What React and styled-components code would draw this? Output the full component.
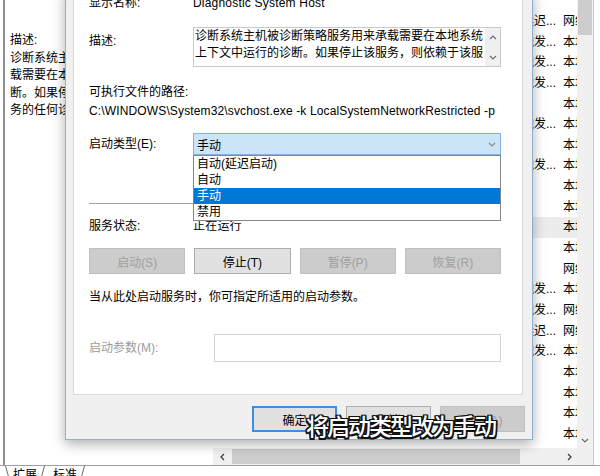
import React from 'react';
import styled, { createGlobalStyle } from 'styled-components';

const GlobalStyle = createGlobalStyle`
  html, body { margin: 0; padding: 0; background: #fff; }
  body {
    font-family: "Liberation Sans", "Noto Sans CJK SC", sans-serif;
    font-size: 12px;
    color: #000;
  }
  * { box-sizing: border-box; }
`;

const services = [
    ['Delivery Optimization', '自动(延迟...', '网络服务'],
    ['Device Association Service', '手动(触发...', '本地系统'],
    ['Device Install Service', '手动(触发...', '本地系统'],
    ['Device Management Enrollment', '手动(触发...', '本地系统'],
    ['Device Management WAP Push', '手动', '本地系统'],
    ['Device Setup Manager', '手动(触发...', '本地系统'],
    ['DevicesFlow_3e5a1', '手动', '本地系统'],
    ['DevQuery Background Discovery', '手动(触发...', '本地系统'],
    ['DHCP Client', '手动', '本地系统'],
    ['Diagnostic Execution Service', '手动', '本地系统'],
    ['Diagnostic Policy Service', '手动', '本地系统'],
    ['Diagnostic Service Host', '手动', '本地系统'],
    ['Diagnostic System Host', '手动', '网络服务'],
    ['Distributed Link Tracking Client', '手动(触发...', '本地系统'],
    ['Distributed Transaction Coordinator', '手动(触发...', '网络服务'],
    ['DNS Client', '自动(延迟...', '网络服务'],
    ['Downloaded Maps Manager', '手动(触发...', '本地系统'],
    ['Embedded Mode', '手动', '本地系统'],
    ['Encrypting File System (EFS)', '手动', '本地系统'],
    ['Enterprise App Management', '手动', '本地系统'],
    ['Extensible Authentication Protocol', '手动', '本地系统'],
];

const startOptions = ['自动(延迟启动)', '自动', '手动', '禁用'];

function Chevron({ dir = 'down', color = '#6d6d6d' }) {
    const points = {
        down: '1,3 4,6 7,3',
        up: '1,5 4,2 7,5',
        left: '5,1 2,4 5,7',
        right: '3,1 6,4 3,7',
    }[dir];
    return (
        <svg width="8" height="8" viewBox="0 0 8 8">
            <polyline points={points} fill="none" stroke={color} strokeWidth="1.2" />
        </svg>
    );
}

function App() {
    return (
        <>
            <GlobalStyle />
            <Screen>
                <Frame>
                    <Body>
                        <InfoPane>
                            <div>描述:</div>
                            <div>诊断系统主机被诊断策略服务用来承载需要在本地系统上下文中运行的诊断。如果停止该服务，则依赖于该服务的任何诊断将不再运行。</div>
                        </InfoPane>
                        <ListPane>
                            {services.map(([name, type, logon], i) => (
                                <ListRow key={name} $hover={i === 10}>
                                    <Cell>{name}</Cell>
                                    <Cell>{type}</Cell>
                                    <Cell>{logon}</Cell>
                                </ListRow>
                            ))}
                        </ListPane>
                        <VScroll>
                            <VThumb />
                            <ArrowSlot><Chevron dir="down" /></ArrowSlot>
                        </VScroll>
                    </Body>
                    <HScrollRow>
                        <HBlank />
                        <HBar>
                            <ArrowSlot $w={19}><Chevron dir="left" color="#333" /></ArrowSlot>
                            <HThumb />
                            <HTrack />
                            <ArrowSlot $w={17}><Chevron dir="right" color="#333" /></ArrowSlot>
                        </HBar>
                        <Corner />
                    </HScrollRow>
                </Frame>
                <TabStrip>
                    <Tab $active>扩展</Tab>
                    <Tab>标准</Tab>
                </TabStrip>

                <Dialog>
                    <Sheet>
                        <FieldRow>
                            <Label $lh={20}>显示名称:</Label>
                            <Value>Diagnostic System Host</Value>
                        </FieldRow>
                        <FieldRow $mt={14} $align="start">
                            <Label $pt={5}>描述:</Label>
                            <TextBox>
                                <TextBody>诊断系统主机被诊断策略服务用来承载需要在本地系统上下文中运行的诊断。如果停止该服务，则依赖于该服务的任何诊断将不再运行。</TextBody>
                                <TextScroll>
                                    <Chevron dir="up" />
                                    <Chevron dir="down" />
                                </TextScroll>
                            </TextBox>
                        </FieldRow>
                        <Line $mt={16}>可执行文件的路径:</Line>
                        <Line $latin>C:\WINDOWS\System32\svchost.exe -k LocalSystemNetworkRestricted -p</Line>
                        <FieldRow $mt={12}>
                            <Label>启动类型(E):</Label>
                            <SelectWrap>
                                <Select>
                                    <span>手动</span>
                                    <Chevron dir="down" color="#8a8a8a" />
                                </Select>
                                <Options>
                                    {startOptions.map((opt) => (
                                        <Option key={opt} $selected={opt === '手动'}>{opt}</Option>
                                    ))}
                                </Options>
                            </SelectWrap>
                        </FieldRow>
                        <Divider />
                        <FieldRow $mt={13}>
                            <Label $lh={18}>服务状态:</Label>
                            <Value>正在运行</Value>
                        </FieldRow>
                        <ButtonGrid>
                            <Button disabled>启动(S)</Button>
                            <Button>停止(T)</Button>
                            <Button disabled>暂停(P)</Button>
                            <Button disabled>恢复(R)</Button>
                        </ButtonGrid>
                        <Line $mt={14}>当从此处启动服务时，你可指定所适用的启动参数。</Line>
                        <FieldRow $mt={27} $label={125}>
                            <Label $muted>启动参数(M):</Label>
                            <Input />
                        </FieldRow>
                    </Sheet>
                    <Footer>
                        <Button $w={85} $default>确定</Button>
                        <Button $w={85}>取消</Button>
                        <Button $w={85} disabled>应用(A)</Button>
                    </Footer>
                </Dialog>

                <Caption>将启动类型改为手动</Caption>
                <Pointer width="14" height="20" viewBox="0 0 14 20">
                    <path d="M3 3 L3 17 L6.2 13.8 L8.6 19 L10.6 18.1 L8.3 13 L12.6 13 Z" fill="#fff" stroke="#555" strokeWidth="1" strokeLinejoin="round" />
                    <circle cx="3" cy="3" r="2.6" fill="#e8141b" />
                </Pointer>
            </Screen>
        </>
    );
}

/* background window */

const Screen = styled.div`
    position: relative;
    width: 600px;
    height: 476px;
    overflow: hidden;
    background: #fff;
`;

const Frame = styled.div`
    margin-left: 3px;
    width: 591px;
    display: flex;
    flex-direction: column;
    border-left: 2px solid #8e8e8e;
    border-right: 1px solid #c8c8c8;
`;

const Body = styled.div`
    display: flex;
    height: 448px;
`;

const InfoPane = styled.div`
    flex: 0 0 207px;
    padding: 32px 0 0 5px;
    line-height: 17.5px;
    overflow: hidden;
`;

const ListPane = styled.div`
    flex: 1;
    min-width: 0;
    padding-top: 11px;
    overflow: hidden;
`;

const ListRow = styled.div`
    display: grid;
    grid-template-columns: 282px 69px minmax(0, 1fr);
    height: 20.65px;
    line-height: 20.65px;
    background: ${(p) => (p.$hover ? '#ececec' : 'transparent')};
`;

const Cell = styled.div`
    white-space: nowrap;
    overflow: hidden;
`;

const VScroll = styled.div`
    flex: 0 0 16px;
    display: flex;
    flex-direction: column;
    justify-content: space-between;
    background: #f0f0f0;
`;

const VThumb = styled.div`
    height: 35px;
    margin: 0 1px;
    background: #cdcdcd;
`;

const ArrowSlot = styled.div`
    flex: 0 0 ${(p) => (p.$w ? `${p.$w}px` : 'auto')};
    height: 17px;
    display: flex;
    align-items: center;
    justify-content: center;
    background: #f0f0f0;
`;

const HScrollRow = styled.div`
    display: flex;
    height: 17px;
`;

const HBlank = styled.div`
    flex: 0 0 208px;
`;

const HBar = styled.div`
    flex: 1;
    min-width: 0;
    display: flex;
    background: #f0f0f0;
`;

const HThumb = styled.div`
    flex: 0 0 288px;
    margin: 1px 0;
    background: #cdcdcd;
`;

const HTrack = styled.div`
    flex: 1;
`;

const Corner = styled.div`
    flex: 0 0 16px;
    background: #f0f0f0;
`;

const TabStrip = styled.div`
    display: flex;
    height: 11px;
    padding-left: 5px;
    border-top: 1px solid #a0a0a0;
`;

const Tab = styled.div`
    position: relative;
    padding: 2px 8px 0 8px;
    line-height: 14px;
    background: ${(p) => (p.$active ? '#fff' : 'transparent')};

    &::before,
    &::after {
        content: '';
        position: absolute;
        top: 0;
        height: 14px;
        border-left: 1px solid #6a6a6a;
        transform-origin: top;
    }
    &::before {
        left: 0;
        transform: skewX(16deg);
        display: ${(p) => (p.$active ? 'block' : 'none')};
    }
    &::after {
        right: 0;
        transform: skewX(-16deg);
    }
`;

/* properties dialog */

const Dialog = styled.div`
    position: absolute;
    left: 65px;
    top: -9px;
    width: 468px;
    border: 1px solid #8fb0d0;
    background: #f0f0f0;
    box-shadow: 0 4px 12px rgba(0, 0, 0, 0.32);
`;

const Sheet = styled.div`
    margin: 0 9px 0 7px;
    padding: 0 21px 32px 15px;
    background: #fff;
    border: 1px solid #d9d9d9;
`;

const FieldRow = styled.div`
    display: grid;
    grid-template-columns: ${(p) => p.$label || 104}px 1fr;
    align-items: ${(p) => p.$align || 'center'};
    margin-top: ${(p) => p.$mt || 0}px;
`;

const Label = styled.div`
    line-height: ${(p) => p.$lh || 18}px;
    padding-top: ${(p) => p.$pt || 0}px;
    color: ${(p) => (p.$muted ? '#9b9b9b' : '#000')};
    white-space: nowrap;
`;

const Value = styled.div`
    line-height: 18px;
    white-space: nowrap;
    letter-spacing: 0.2px;
`;

const Line = styled.div`
    line-height: 19px;
    margin-top: ${(p) => p.$mt || 0}px;
    white-space: nowrap;
    letter-spacing: ${(p) => (p.$latin ? '0.14px' : '0')};
`;

const TextBox = styled.div`
    display: flex;
    height: 40px;
    border: 1px solid #c9c9c9;
`;

const TextBody = styled.div`
    flex: 1;
    height: 34px;
    padding-left: 1px;
    line-height: 17px;
    overflow: hidden;
`;

const TextScroll = styled.div`
    width: 15px;
    display: flex;
    flex-direction: column;
    align-items: center;
    justify-content: space-around;
    background: #f0f0f0;
`;

const SelectWrap = styled.div`
    position: relative;
`;

const Select = styled.div`
    height: 22px;
    display: flex;
    align-items: center;
    justify-content: space-between;
    padding: 0 4px 0 3px;
    background: #cce4f7;
    border: 1px solid #7eb4ea;
`;

const Options = styled.div`
    position: absolute;
    top: 100%;
    left: 0;
    right: 0;
    background: #fff;
    border: 1px solid #828790;
    z-index: 2;
`;

const Option = styled.div`
    height: 16px;
    line-height: 16px;
    padding-left: 3px;
    background: ${(p) => (p.$selected ? '#0078d7' : '#fff')};
    color: ${(p) => (p.$selected ? '#fff' : '#000')};
`;

const Divider = styled.div`
    height: 1px;
    margin-top: 48px;
    background: #a0a0a0;
`;

const ButtonGrid = styled.div`
    display: grid;
    grid-template-columns: repeat(4, 1fr);
    gap: 9px;
    margin-top: 13px;
`;

const Button = styled.button`
    height: 26px;
    width: ${(p) => (p.$w ? `${p.$w}px` : 'auto')};
    padding: 0;
    font: inherit;
    color: #000;
    background: #e1e1e1;
    border: ${(p) => (p.$default ? '2px solid #3d8ee0' : '1px solid #adadad')};

    &:disabled {
        color: #a0a0a0;
        background: #cccccc;
        border-color: #bfbfbf;
    }
`;

const Input = styled.div`
    height: 28px;
    border: 1px solid #d4d4d4;
    background: #fff;
`;

const Footer = styled.div`
    height: 44px;
    display: flex;
    justify-content: flex-end;
    align-items: flex-start;
    gap: 9px;
    padding: 11px 7px 0 0;
`;

/* overlays */

const Caption = styled.div`
    position: absolute;
    left: 306px;
    top: 414px;
    font-family: "Noto Sans CJK SC", sans-serif;
    font-size: 23px;
    font-weight: 500;
    line-height: 23px;
    letter-spacing: -2px;
    color: #fff;
    white-space: nowrap;
    text-shadow:
        -1.5px -1.5px 0 #111, 1.5px -1.5px 0 #111, -1.5px 1.5px 0 #111, 1.5px 1.5px 0 #111,
        0 -1.5px 0 #111, 0 1.5px 0 #111, -1.5px 0 0 #111, 1.5px 0 0 #111;
`;

const Pointer = styled.svg`
    position: absolute;
    left: 322px;
    top: 194px;
`;

export default App;
